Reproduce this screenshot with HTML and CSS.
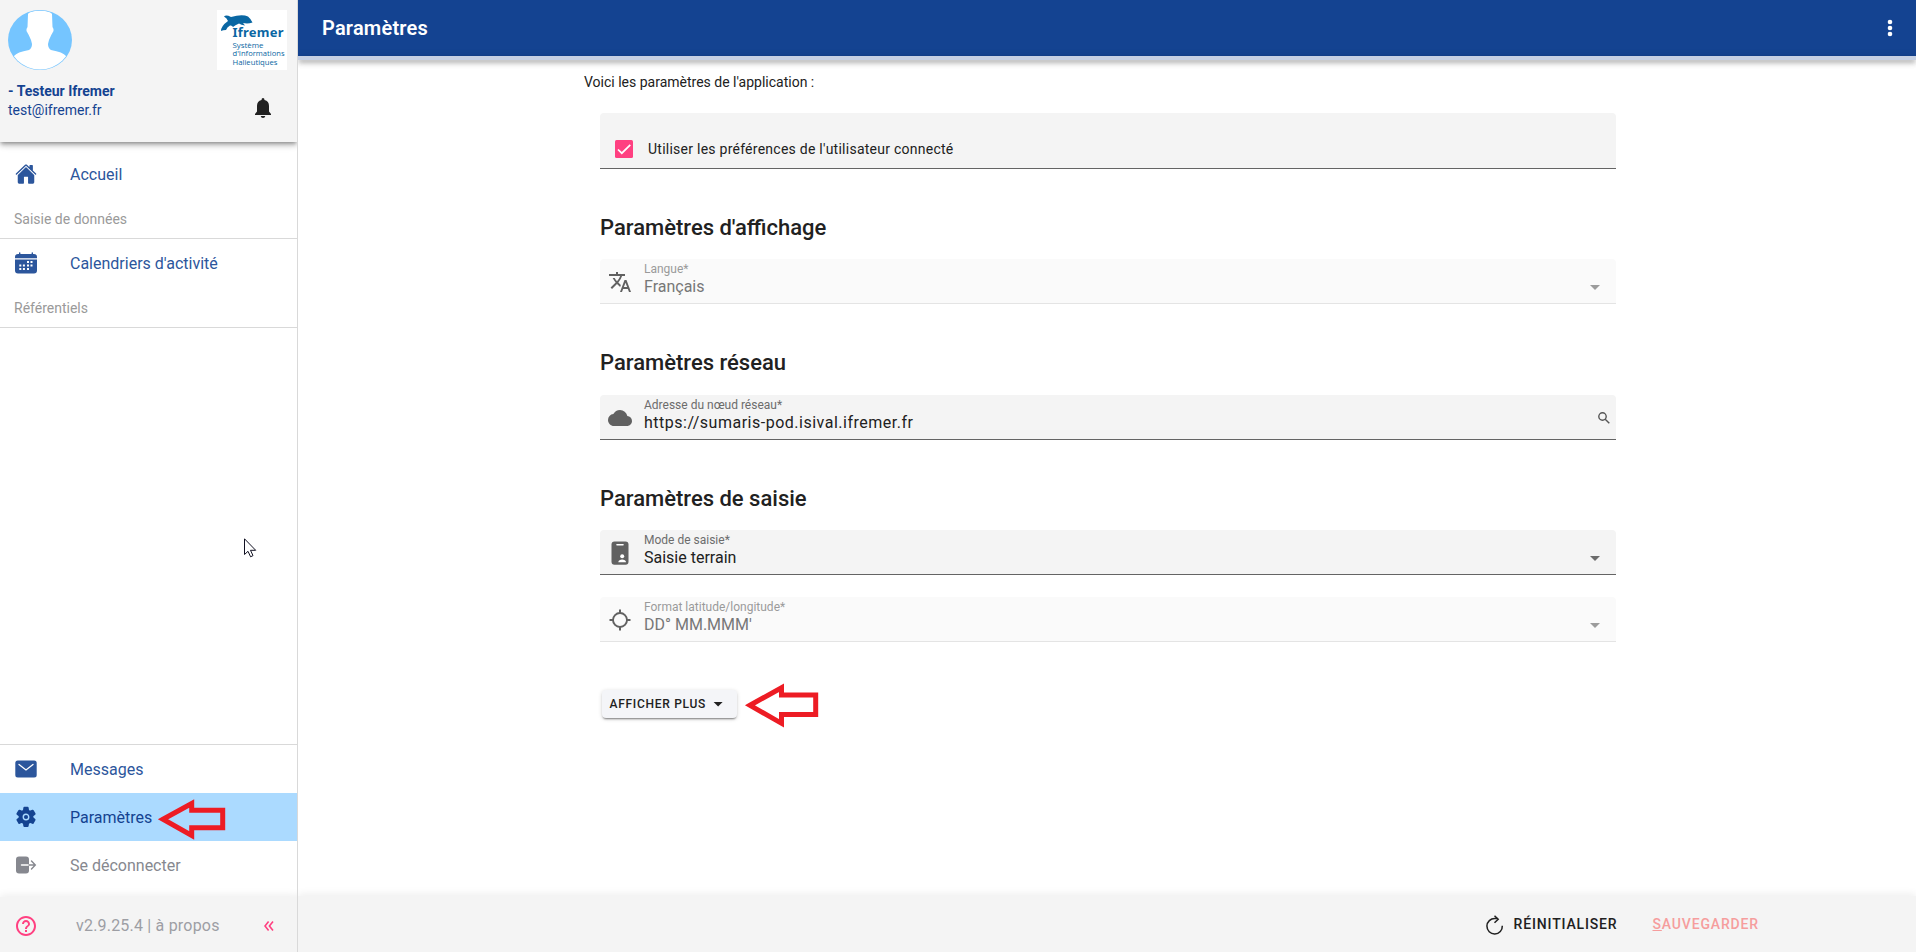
FILE: index.html
```html
<!DOCTYPE html>
<html lang="fr">
<head>
<meta charset="utf-8">
<title>Paramètres</title>
<link rel="stylesheet" href="styles.css">
</head>
<body>
<div class="app">
  <aside class="sidebar">
    <header class="profile">
      <div class="profile-top">
        <svg class="avatar" viewBox="0 0 64 60"><defs><clipPath id="av"><ellipse cx="32" cy="30" rx="31.4" ry="29.4"/></clipPath></defs><ellipse cx="32" cy="30" rx="32" ry="30" fill="#75c5ff"/><g clip-path="url(#av)"><path fill="#fff" d="M20 4Q21 1 32 0.500Q43 1 44 4L44.500 17Q46 19 45.500 21Q43 25 41 30L40 34Q40 38 43 40Q55 42 58 46L64 60H0L6 46Q9 42 21 40Q24 38 24 34L23 30Q21 25 18.500 21Q18 19 19.500 17Z"/></g></svg>
        <svg class="logo" viewBox="0 0 70 60"><rect width="70" height="60" fill="#fff"/><path fill="#0a67a3" d="M7 6.500Q9 4.500 14 7Q25 4 31 6.500Q34 9 35.500 12.500Q31 14 26 13L28 15.500Q24 15 22 13.500Q18 15 16 17Q15 15 13 15.500Q10 17 9 20Q6 20 4 21Q4 16 11 11Q10 8 7 6.500Z"/><g fill="#0a67a3"><text class="logo-name" x="15.500" y="26.800" textLength="51">Ifremer</text><text class="logo-sub" x="15.500" y="37.500" textLength="31" lengthAdjust="spacingAndGlyphs">Système</text><text class="logo-sub" x="15.500" y="46" textLength="52" lengthAdjust="spacingAndGlyphs">d'Informations</text><text class="logo-sub" x="15.500" y="54.500" textLength="45" lengthAdjust="spacingAndGlyphs">Halieutiques</text></g></svg>
      </div>
      <div class="profile-bottom">
        <div class="identity"><strong>- Testeur Ifremer</strong><span>test@ifremer.fr</span></div>
        <svg class="bell" viewBox="0 0 16 20"><path fill="#212121" d="M8 0Q9.500 0 9.500 2Q14 3 14 8V13.500L16 16V17H0V16L2 13.500V8Q2 3 6.500 2Q6.500 0 8 0ZM5.700 18H10.300Q10 20 8 20T5.700 18Z"/></svg>
      </div>
    </header>
    <nav class="menu">
      <a class="item"><svg class="ico" viewBox="0 0 512 512"><path d="M261.600 101.700a8 8 0 0 0-11.100 0L66.400 277.600a8 8 0 0 0-2.500 5.800L63.900 448a32 32 0 0 0 32 32H192a16 16 0 0 0 16-16V328a8 8 0 0 1 8-8h80a8 8 0 0 1 8 8v136a16 16 0 0 0 16 16h96.100a32 32 0 0 0 32-32V283.400a8 8 0 0 0-2.500-5.800Z"/><path d="M490.900 244.200l-74.800-71.600V64a16 16 0 0 0-16-16h-48a16 16 0 0 0-16 16v32l-57.900-55.400C272.800 35.100 264.700 32 256 32s-16.700 3.100-22.100 8.600L21.200 244.200c-6.200 6-7 15.900-1.200 22.200a16 16 0 0 0 23.200.600L250.500 69a8 8 0 0 1 11.100 0L469 267.200a16 16 0 0 0 22.600-.400C497.700 260.400 497.200 250.200 490.900 244.200Z"/></svg><span>Accueil</span></a>
      <div class="section">Saisie de données</div>
      <a class="item"><svg class="ico" viewBox="0 0 22 22"><path d="M0 6.200V5Q0 2 3 2H4V.8Q4 .2 4.700 .2T5.400 .8V2H16.600V.8Q16.600 .2 17.300 .2T18 .8V2H19Q22 2 22 5V6.200ZM0 7.500H22V18.500Q22 21.500 19 21.500H3Q0 21.500 0 18.500Z"/><path class="cut" d="M12 9h2v2h-2zm3.500 0h2v2h-2zM4.300 12.500h2v2h-2zm3.600 0h2v2h-2zm4.100 0h2v2h-2zm3.500 0h2v2h-2zM4.300 16h2v2h-2zm3.600 0h2v2h-2zm4.100 0h2v2h-2z"/></svg><span>Calendriers d'activité</span></a>
      <div class="section">Référentiels</div>
    </nav>
    <nav class="menu menu-end">
      <a class="item"><svg class="ico" viewBox="0 0 22 22"><rect x="0.300" y="2.500" width="21.400" height="17" rx="2.500"/><path d="M4 6.500l7 5.500l7-5.500" fill="none" stroke="#fff" stroke-width="1.300" stroke-linecap="round"/></svg><span>Messages</span></a>
      <a class="item selected"><svg class="ico" viewBox="0 0 512 512"><circle cx="256" cy="256" r="48"/><path d="M470.400 300.700l-.500-.400-38-29.800a16 16 0 0 1-6.200-13.400v-11.600a16 16 0 0 1 6.300-13.200L469.900 202.600l.500-.400a24.800 24.800 0 0 0 5.600-31.500l-42.600-72-.200-.300A25 25 0 0 0 402.700 88l-.400.100-44.700 17.900a16.100 16.100 0 0 1-14.900-1.300q-4.900-3.100-10-5.900a16 16 0 0 1-8.200-12.300l-6.700-47.300-.200-.700A25 25 0 0 0 293.200 18H218.800a24.900 24.900 0 0 0-24.300 20.700l-.100.700-6.700 47.500a16.100 16.100 0 0 1-8.100 12.300 172 172 0 0 0-10 5.800 16 16 0 0 1-14.900 1.300L110 88l-.400-.200a25 25 0 0 0-30.400 10.900l-.200.300-42.700 72.200a24.900 24.900 0 0 0 5.500 31.500l.500.400 38 29.800a16 16 0 0 1 6.200 13.400v11.600a16 16 0 0 1-6.300 13.200L42.300 300.900l-.500.400A24.800 24.800 0 0 0 36.200 332.800l42.600 72 .200.300a25 25 0 0 0 30.400 10.900l.4-.1 44.700-17.900a16.100 16.100 0 0 1 14.900 1.300q4.900 3.100 10 5.900a16 16 0 0 1 8.200 12.300l6.600 47.300.200.700A25 25 0 0 0 218.700 486h74.400a24.900 24.900 0 0 0 24.300-20.700l.100-.7 6.700-47.500a16.100 16.100 0 0 1 8.200-12.300q5.100-2.700 9.900-5.800a16 16 0 0 1 14.900-1.300l44.800 17.900.400.200a25 25 0 0 0 30.400-10.900l.200-.300 42.700-72.200a24.900 24.900 0 0 0-5.300-31.700ZM336 259.800A80 80 0 1 1 252.200 176 80.200 80.200 0 0 1 336 259.800Z"/></svg><span>Paramètres</span>
        <svg class="arrow arrow-menu" viewBox="0 0 66 39"><path d="M4 19.300L32.700 3.500V10.300H63.700V27.700H32.700V35.500Z"/></svg></a>
      <a class="item muted"><svg class="ico" viewBox="0 0 22 22"><rect x="1" y="2.500" width="13" height="17" rx="3"/><path d="M6.500 11H14" stroke="#fff" stroke-width="1.500" stroke-linecap="round"/><path d="M14 11H20M16.500 7L20.300 11L16.500 15" fill="none" stroke="#86888f" stroke-width="1.400" stroke-linecap="round"/></svg><span>Se déconnecter</span></a>
    </nav>
    <footer class="side-foot">
      <svg class="help" viewBox="0 0 24 24"><path d="M11 18h2v-2h-2v2zm1-16C6.480 2 2 6.480 2 12s4.480 10 10 10 10-4.480 10-10S17.520 2 12 2zm0 18c-4.410 0-8-3.590-8-8s3.590-8 8-8 8 3.590 8 8-3.590 8-8 8zm0-14c-2.210 0-4 1.790-4 4h2c0-1.100.9-2 2-2s2 .9 2 2c0 2-3 1.750-3 5h2c0-2.250 3-2.500 3-5 0-2.210-1.790-4-4-4z"/></svg>
      <span class="version">v2.9.25.4 | à propos</span>
      <svg class="collapse" viewBox="0 0 10 10"><path d="M4.600 0.500L1 5L4.600 9.500M9 0.500L5.400 5L9 9.500"/></svg>
    </footer>
    <svg class="cursor" viewBox="0 0 13 20"><path d="M.5.800V16.500L4 13.300L6.600 18.800L9 17.600L6.500 12.300H11.700Z" fill="#fff" stroke="#112" stroke-width="1"/></svg>
  </aside>
  <main class="page">
    <header class="toolbar"><h1>Paramètres</h1><svg class="dots" viewBox="0 0 6 18"><circle cx="3" cy="3" r="2.300"/><circle cx="3" cy="9" r="2.300"/><circle cx="3" cy="15" r="2.300"/></svg></header>
    <div class="progress"></div>
    <section class="content">
      <p class="intro">Voici les paramètres de l'application :</p>
      <form class="form">
        <label class="field check"><svg class="box" viewBox="0 0 18 18"><rect width="18" height="18" rx="1.500" fill="#ff4081"/><path d="M3 9.500L6.800 13.200L15.300 4.800" fill="none" stroke="#fff" stroke-width="1.700"/></svg><span>Utiliser les préférences de l'utilisateur connecté</span></label>
        <h2>Paramètres d'affichage</h2>
        <div class="field disabled"><svg class="prefix" viewBox="0 0 24 24"><path d="M12.870 15.070l-2.540-2.510.03-.03A17.520 17.520 0 0 0 14.070 6H17V4h-7V2H8v2H1v2h11.170C11.500 7.920 10.440 9.750 9 11.350 8.070 10.320 7.300 9.190 6.690 8h-2c.73 1.630 1.730 3.170 2.980 4.560l-5.090 5.020L4 19l5-5 3.110 3.110.76-2.040zM18.500 10h-2L12 22h2l1.120-3h4.750L21 22h2l-4.500-12zm-2.620 7l1.620-4.330L19.120 17h-3.240z"/></svg><div class="text"><small>Langue*</small><span>Français</span></div><i class="caret"></i></div>
        <h2>Paramètres réseau</h2>
        <div class="field"><svg class="prefix" viewBox="0 0 24 24"><path d="M19.350 10.040A7.490 7.490 0 0 0 12 4C9.110 4 6.600 5.640 5.350 8.040A5.994 5.994 0 0 0 0 14c0 3.310 2.690 6 6 6h13c2.760 0 5-2.240 5-5 0-2.640-2.050-4.780-4.650-4.960z"/></svg><div class="text"><small>Adresse du nœud réseau*</small><span class="spaced">https://sumaris-pod.isival.ifremer.fr</span></div><svg class="search" viewBox="0 0 12 12"><circle cx="4.500" cy="4.500" r="3.700"/><path d="M7.200 7.200L11.300 11.300"/></svg></div>
        <h2 class="compact">Paramètres de saisie</h2>
        <div class="field"><svg class="prefix" viewBox="0 0 24 24"><rect x="3.500" y="0.500" width="17" height="23.300" rx="3"/><path d="M9 3.800H15" stroke="#fff" stroke-width="1.600" stroke-linecap="round"/><circle cx="14.200" cy="15.300" r="2" fill="#fff"/><path d="M10.300 21.200C10.300 17.700 18 17.700 18 21.200Z" fill="#fff"/></svg><div class="text"><small>Mode de saisie*</small><span>Saisie terrain</span></div><i class="caret"></i></div>
        <div class="field disabled last"><svg class="prefix" viewBox="0 0 24 24"><circle cx="12" cy="12" r="7" fill="none" stroke="#616161" stroke-width="1.900"/><path d="M12 1.500V6M12 18V22.500M1.500 12H6M18 12H22.500" stroke="#616161" stroke-width="2"/></svg><div class="text"><small>Format latitude/longitude*</small><span>DD° MM.MMM'</span></div><i class="caret"></i></div>
        <div class="more-row"><button class="more" type="button"><span>AFFICHER PLUS</span><i class="caret-dark"></i></button><svg class="arrow arrow-more" viewBox="0 0 72 43"><path d="M4 21.300L35.500 3.700V11H69.700V30.500H35.500V39.300Z"/></svg></div>
      </form>
    </section>
    <footer class="page-foot"><svg class="reload" viewBox="0 0 18 20"><path d="M16.300 10.700A7.700 7.700 0 1 1 9 3.500H12M8.500.700L12.200 4.200L8.500 7.800"/></svg><span class="reset">RÉINITIALISER</span><span class="save"><u>S</u>AUVEGARDER</span></footer>
  </main>
</div>
</body>
</html>
```
FILE: styles.css
```css
* { box-sizing: border-box; }
body { margin: 0; font-family: Roboto, "Liberation Sans", sans-serif; color: #212121; background: #fff; overflow: hidden; }
svg { display: block; flex: none; }
h1, h2, p { margin: 0; }
.app { display: flex; height: 952px; }

/* Sidebar */
.sidebar { position: relative; width: 298px; flex: none; display: flex; flex-direction: column; border-right: 1px solid #d9d9d9; }
.profile { height: 142px; padding: 10px 10px 0 8px; background: #f4f4f4; box-shadow: 0 2px 4px -1px rgba(0,0,0,.35), 0 4px 5px rgba(0,0,0,.14), 0 1px 10px rgba(0,0,0,.12); clip-path: inset(0 0 -16px 0); }
.profile-top { display: flex; justify-content: space-between; }
.avatar { width: 64px; height: 60px; }
.logo { width: 70px; height: 60px; }
.logo-name { font: 700 13px "Noto Sans", sans-serif; }
.logo-sub { font: 500 6.6px "Open Sans", sans-serif; }
.profile-bottom { display: flex; justify-content: space-between; padding: 12px 16px 0 0; }
.identity { display: flex; flex-direction: column; font-size: 14px; line-height: 19px; color: #144391; }
.identity strong { font-weight: 700; }
.bell { width: 16px; height: 20px; margin-top: 16px; }
.menu { padding-top: 8px; }
.item { display: flex; align-items: center; height: 48px; padding-left: 15px; gap: 33px; font-size: 16px; color: #2c569c; }
.ico { width: 22px; height: 22px; fill: currentColor; }
.cut { fill: #fff; }
.section { height: 41px; padding-left: 14px; border-bottom: 1px solid #d9d9d9; font-size: 14px; line-height: 42px; color: #9a9a9a; }
.menu-end { margin-top: auto; padding: 0 0 8px; border-top: 1px solid #d9d9d9; }
.selected { position: relative; background: #abdaff; color: #144391; }
.muted { color: #86888f; }
.side-foot { display: flex; align-items: center; height: 55px; padding: 2px 23px 0 14px; background: #f4f4f4; box-shadow: 0 -2px 8px rgba(0,0,0,.07); clip-path: inset(-10px 0 0 0); }
.help { width: 24px; height: 24px; fill: #ff4081; }
.version { margin-left: 38px; font-size: 16px; letter-spacing: .2px; color: #9d9ea4; }
.collapse { width: 10px; height: 10px; margin-left: auto; fill: none; stroke: #ff4081; stroke-width: 1.6; }
.cursor { position: absolute; left: 244px; top: 538px; width: 13px; height: 20px; }
.arrow { position: absolute; overflow: visible; fill: none; stroke: #ed1c24; stroke-width: 5; stroke-linejoin: miter; }
.arrow-menu { left: 159px; top: 7px; width: 66px; height: 39px; }

/* Page */
.page { flex: 1; display: flex; flex-direction: column; min-width: 0; }
.toolbar { display: flex; align-items: center; justify-content: space-between; height: 56px; padding: 0 23px 0 24px; background: #144391; color: #fff; }
.toolbar h1 { font-size: 20px; font-weight: 600; line-height: 56px; letter-spacing: .2px; }
.dots { width: 6px; height: 18px; fill: #fff; }
.progress { height: 4px; background: #c5d0e4; box-shadow: 0 2px 4px -1px rgba(0,0,0,.35), 0 4px 5px rgba(0,0,0,.14), 0 1px 10px rgba(0,0,0,.12); }
.content { flex: 1; padding: 12px 300px 0 286px; }
.intro { font-size: 14px; line-height: 20px; }
.form { padding: 21px 0 0 16px; }
.field { display: flex; height: 45px; border-radius: 4px 4px 0 0; background: #f4f4f4; border-bottom: 1px solid #646464; }
.check { height: 56px; padding: 27px 0 0 15px; gap: 15px; font-size: 14px; line-height: 18px; letter-spacing: .25px; }
.box { width: 18px; height: 18px; }
h2 { height: 91px; padding-top: 44px; font-size: 22px; font-weight: 500; line-height: 30px; }
.check + h2, .field + .compact { height: 90px; }
.prefix { width: 24px; height: 24px; margin: 11px 12px 0 8px; fill: #616161; }
.text { display: flex; flex-direction: column; }
.text small { margin-top: 2px; font-size: 12px; line-height: 16px; color: #6c6c6c; }
.text span { font-size: 16px; line-height: 19px; }
.text .spaced { letter-spacing: .5px; }
.disabled { background: #fafafa; border-color: #e4e4e4; }
.disabled small { color: #9a9a9a; }
.disabled span { color: #777; }
.caret { margin: 26px 16px 0 auto; width: 10px; height: 5px; background: #6c6c6c; clip-path: polygon(0 0, 100% 0, 50% 100%); }
.disabled .caret { background: #9c9c9c; }
.search { width: 12px; height: 12px; margin: 17px 6px 0 auto; fill: none; stroke: #555; stroke-width: 1.4; }
.last { margin-top: 22px; }
.more-row { position: relative; padding: 48px 0 0 2px; }
.more { display: flex; align-items: center; gap: 7px; width: 135px; height: 28px; padding: 0 7.5px; border: 0; border-radius: 4px; background: #f4f5f8; box-shadow: 0 2px 2px -1px rgba(0,0,0,.45), 0 1px 4px rgba(0,0,0,.16); color: #212121; font: 500 12px/28px Roboto, sans-serif; letter-spacing: .72px; }
.caret-dark { width: 10px; height: 5px; background: #212121; clip-path: polygon(0 0, 100% 0, 50% 100%); }
.arrow-more { left: 146px; top: 42px; width: 72px; height: 43px; }
.page-foot { display: flex; align-items: center; height: 56px; padding: 0 157px 0 0; justify-content: flex-end; background: #f4f4f4; box-shadow: 0 -2px 8px rgba(0,0,0,.07); font-size: 14px; font-weight: 500; letter-spacing: .84px; }
.reload { width: 18px; height: 20px; margin: 1px 10px 0 0; fill: none; stroke: #212121; stroke-width: 1.500; }
.save { margin-left: 35px; color: #f69d9d; }
```
